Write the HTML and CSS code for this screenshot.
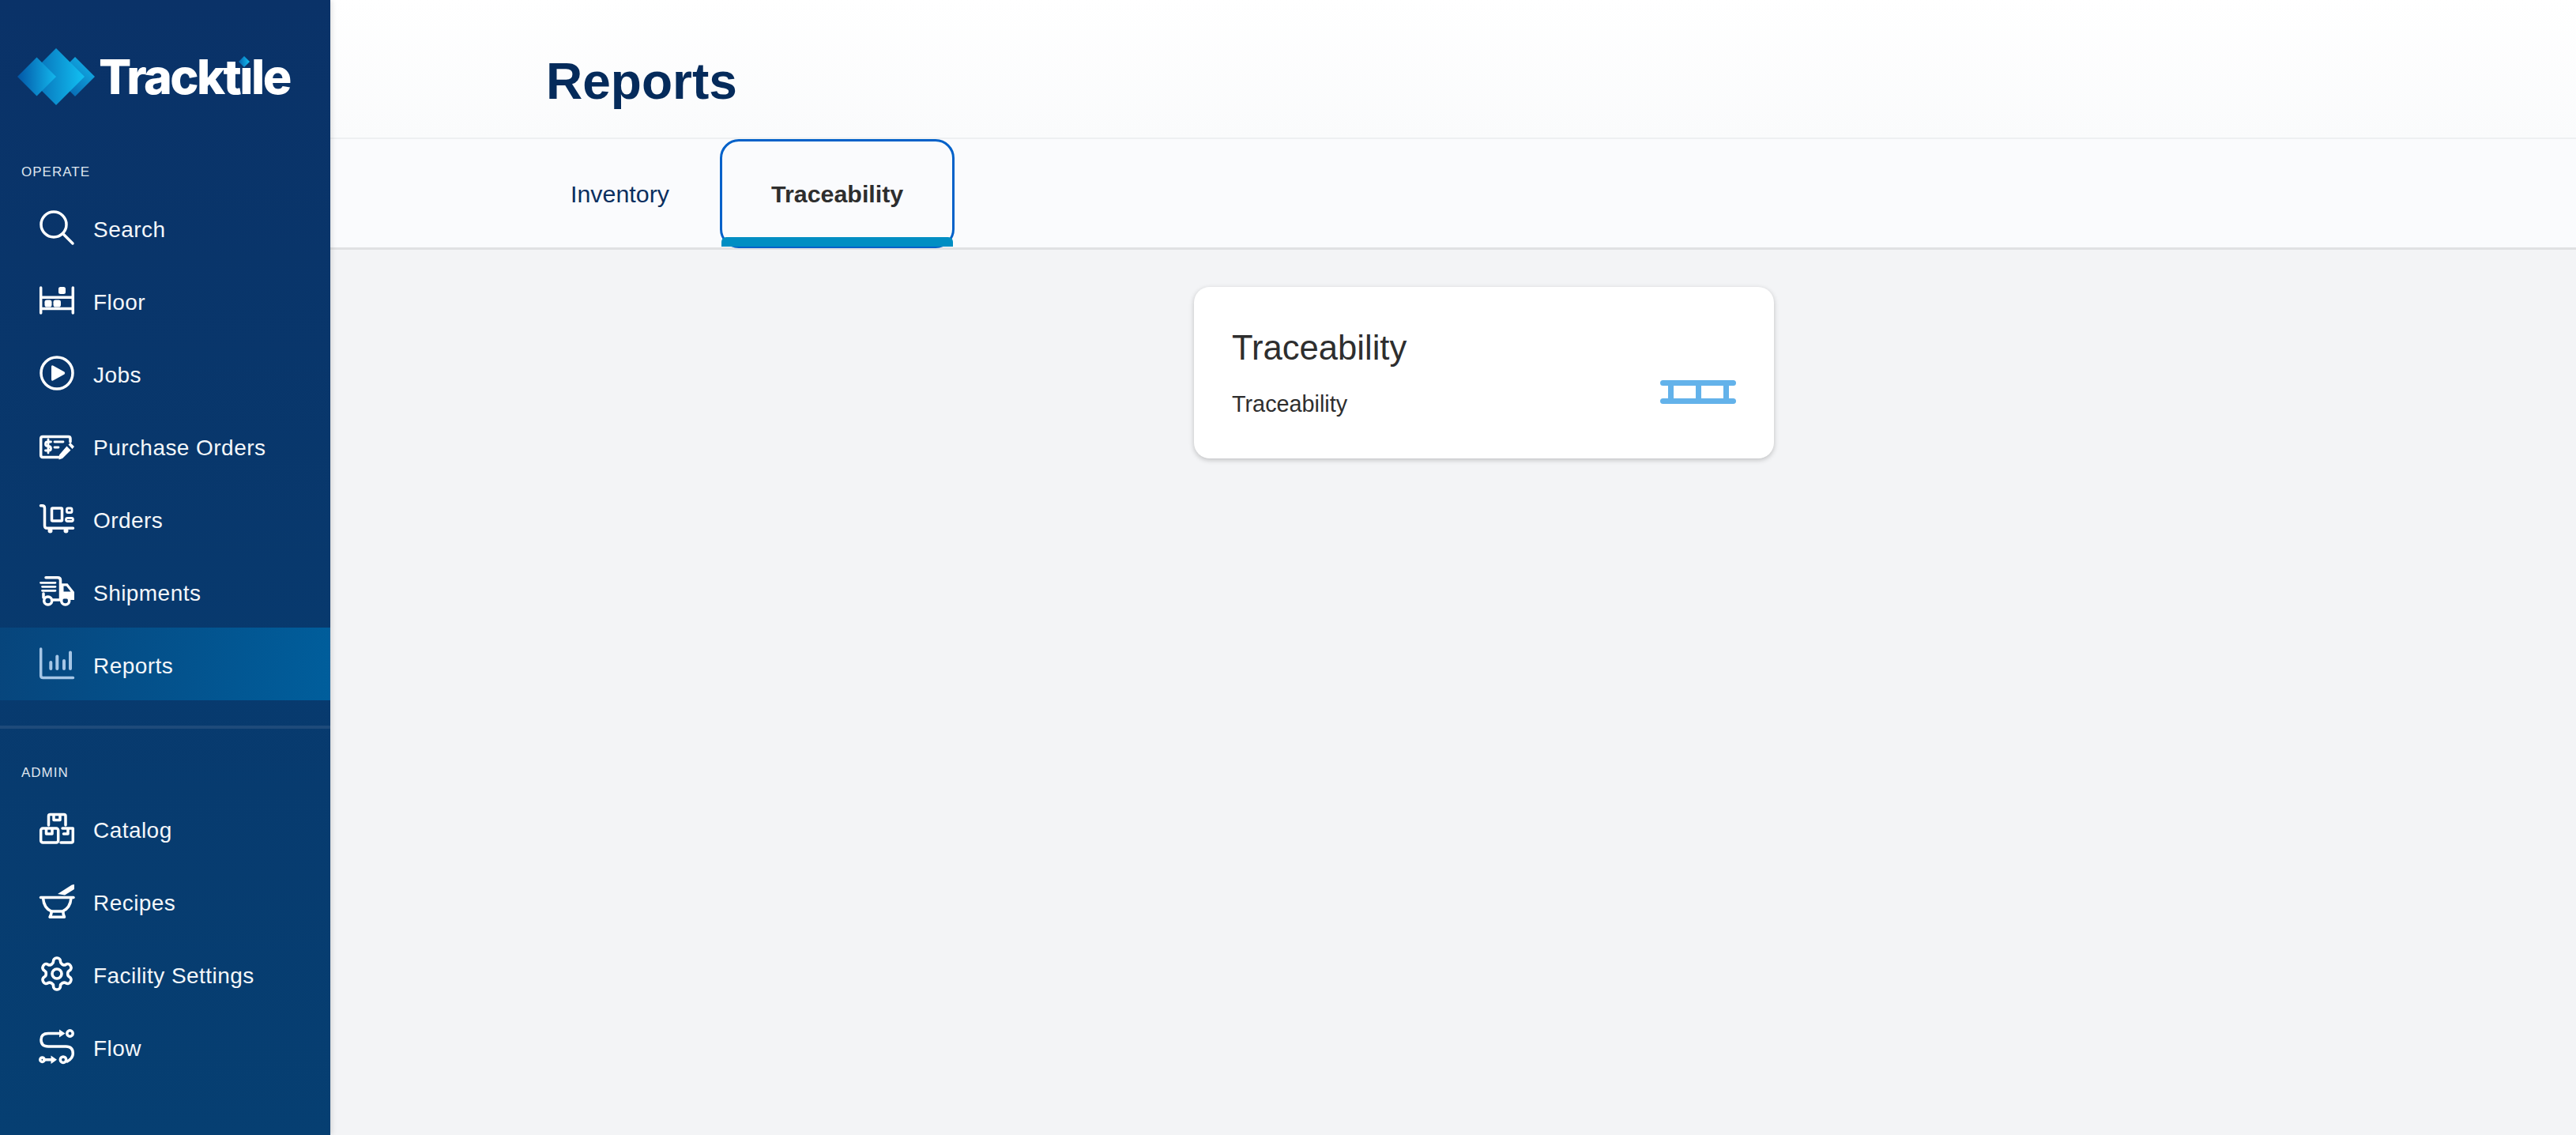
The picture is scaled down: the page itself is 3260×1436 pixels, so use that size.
FILE: index.html
```html
<!DOCTYPE html>
<html lang="en">
<head>
<meta charset="utf-8">
<title>Reports</title>
<link rel="stylesheet" href="styles.css">
</head>
<body>
<div class="app">
  <aside class="sidebar">
    <div class="logo">
      <svg class="logo-mark" viewBox="0 0 100 54" width="100" height="54" aria-hidden="true">
        <defs>
          <linearGradient id="gl" x1="0" y1="0" x2="1" y2="0"><stop offset="0" stop-color="#0256a6"/><stop offset="1" stop-color="#13b7ec"/></linearGradient>
          <linearGradient id="gm" x1="0" y1="0" x2="1" y2="0"><stop offset="0" stop-color="#0562ae"/><stop offset="1" stop-color="#12c0f2"/></linearGradient>
          <linearGradient id="gr" x1="0" y1="1" x2="1" y2="0"><stop offset="0" stop-color="#0457a4"/><stop offset="1" stop-color="#14b9ee"/></linearGradient>
        </defs>
        <path d="M73 2 L98 27 L73 52 L48 27 Z" fill="url(#gr)"/>
        <path d="M49 -9 L85 27 L49 63 L13 27 Z" fill="url(#gm)"/>
        <path d="M24.500 2.500 L49 27 L24.500 51.500 L0 27 Z" fill="url(#gl)"/>
      </svg>
      <span class="wordmark">Trackt<span class="no-dot">i</span>le<svg class="wordmark-dot" viewBox="0 0 16 16" width="16" height="16" aria-hidden="true"><path d="M8 1 L15 8 L8 15 L1 8 Z" fill="url(#gm)"/></svg></span>
    </div>

    <div class="section-label">OPERATE</div>
    <nav class="nav">
      <a class="nav-item">
        <svg class="icon" viewBox="0 0 44 44" aria-hidden="true"><circle cx="18" cy="18" r="16"/><path d="M30 30 L42 42"/></svg>
        <span>Search</span>
      </a>
      <a class="nav-item">
        <svg class="icon" viewBox="0 0 44 44" aria-hidden="true"><path d="M1.700 6 V38 M42.300 6 V38 M2 18.300 H42 M2 32.500 H42"/><rect class="solid" x="24" y="5" width="9" height="9" rx="2.500"/><rect class="solid" x="6.500" y="21.500" width="9" height="9" rx="2.800"/><rect class="solid" x="17.500" y="21.500" width="9.500" height="9" rx="2.800"/></svg>
        <span>Floor</span>
      </a>
      <a class="nav-item">
        <svg class="icon" viewBox="0 0 44 44" aria-hidden="true"><circle cx="22" cy="22" r="20"/><path class="solid" d="M17 12.500 L31.500 20.500 Q33 22 31.500 23.500 L17 31.500 Q15 32.500 15 30 V14 Q15 11.500 17 12.500 Z"/></svg>
        <span>Jobs</span>
      </a>
      <a class="nav-item">
        <svg class="icon" viewBox="0 0 44 44" aria-hidden="true"><path d="M26 36.500 H4 Q1.700 36.500 1.700 34 V13 Q1.700 10.500 4 10.500 H36.500 Q39 10.500 39 13 V17"/><path class="mid" d="M14.500 17 H10 Q7.500 17 7.500 20 Q7.500 22.500 11 22.500 Q14.500 22.500 14.500 25.500 Q14.500 28 12 28 H7.500 M11 14 V31"/><path class="mid" d="M19 17 H30 M19 24 H24"/><path class="solid" d="M36.500 20.500 L39 18 L44 23 L41.500 26 Z M34.500 22.500 L39.500 27.500 L29 38 L24.500 39.500 L25 33.500 Z"/></svg>
        <span>Purchase Orders</span>
      </a>
      <a class="nav-item">
        <svg class="icon" viewBox="0 0 44 44" aria-hidden="true"><path d="M1.500 5.700 H3.500 Q6.500 5.700 6.500 9 V31 Q6.500 34.300 9.500 34.300 H42.500"/><rect x="15.500" y="9" width="13" height="16" rx="1"/><rect class="mid" x="34.500" y="9" width="6.500" height="5.500" rx="1.500"/><rect class="mid" x="33.500" y="21.500" width="9" height="4" rx="2"/><circle class="solid" cx="13.500" cy="37.500" r="3"/><circle class="solid" cx="33.500" cy="37.500" r="3"/></svg>
        <span>Orders</span>
      </a>
      <a class="nav-item">
        <svg class="icon" viewBox="0 0 44 44" aria-hidden="true"><path d="M8 4.700 H23 Q26.500 4.700 26.500 8 V33 H16 M5 25 V30"/><path class="solid" d="M28 12.300 H35.500 L44 23 V33 H38 V31.500 H28 Z"/><path class="cut" d="M30.500 15.500 H34 L39.500 22.500 H30.500 Z"/><path class="mid" d="M1.500 11.300 H20 M3.500 16.300 H20 M3.500 21.300 H20"/><circle class="wheel" cx="10.700" cy="34" r="5"/><circle class="wheel" cx="32.700" cy="34" r="5"/></svg>
        <span>Shipments</span>
      </a>
      <a class="nav-item active">
        <svg class="icon muted" viewBox="0 0 44 44" aria-hidden="true"><path d="M1.700 3 V37 Q1.700 39.500 4.500 39.500 H42.500"/><path class="bar" d="M14.300 20 V28 M22.300 12.500 V28 M31 18 V28 M39 7.500 V28"/></svg>
        <span>Reports</span>
      </a>
    </nav>

    <div class="divider"></div>

    <div class="section-label">ADMIN</div>
    <nav class="nav">
      <a class="nav-item">
        <svg class="icon" viewBox="0 0 44 44" aria-hidden="true"><path d="M11.500 18 V6.500 Q11.500 4.500 13.500 4.500 H31 Q33 4.500 33 6.500 V18 M18 4.500 V11.500 H26 V4.500"/><rect x="1.700" y="22" width="22" height="18" rx="2.500"/><path d="M8.500 22.500 V29 H16 V22.500"/><path d="M29 22 H42.300 V38 Q42.300 40 40.300 40 H27 M36 22.500 V29 H30.500"/></svg>
        <span>Catalog</span>
      </a>
      <a class="nav-item">
        <svg class="icon" viewBox="0 0 44 44" aria-hidden="true"><path class="solid" d="M23 13 L41 1.500 L44 1 V7 L32 14.500 Z"/><path d="M1.500 17.500 H43"/><path d="M4.500 18 Q5.500 31 15 35 H29 Q39 31 40 18"/><path d="M15 35 Q15.500 38 13 42.300 H31.500 Q29.500 38 30 35"/></svg>
        <span>Recipes</span>
      </a>
      <a class="nav-item">
        <svg class="icon gear" viewBox="1 1 22 22" aria-hidden="true"><path d="M12.220 2h-.44a2 2 0 0 0-2 2v.18a2 2 0 0 1-1 1.730l-.43.25a2 2 0 0 1-2 0l-.15-.08a2 2 0 0 0-2.730.73l-.22.38a2 2 0 0 0 .73 2.730l.15.1a2 2 0 0 1 1 1.720v.51a2 2 0 0 1-1 1.740l-.15.09a2 2 0 0 0-.73 2.730l.22.38a2 2 0 0 0 2.730.73l.15-.08a2 2 0 0 1 2 0l.43.25a2 2 0 0 1 1 1.730V20a2 2 0 0 0 2 2h.44a2 2 0 0 0 2-2v-.18a2 2 0 0 1 1-1.730l.43-.25a2 2 0 0 1 2 0l.15.08a2 2 0 0 0 2.730-.73l.22-.39a2 2 0 0 0-.73-2.730l-.15-.08a2 2 0 0 1-1-1.740v-.5a2 2 0 0 1 1-1.740l.15-.09a2 2 0 0 0 .73-2.730l-.22-.38a2 2 0 0 0-2.730-.73l-.15.08a2 2 0 0 1-2 0l-.43-.25a2 2 0 0 1-1-1.730V4a2 2 0 0 0-2-2z"/><circle cx="12" cy="12" r="3"/></svg>
        <span>Facility Settings</span>
      </a>
      <a class="nav-item">
        <svg class="icon" viewBox="0 0 44 44" aria-hidden="true"><path d="M26 5.500 H11 Q2 5.500 2 13.500 Q2 22 11 22 H33.500 Q42.300 22 42.300 31 Q42.300 37 35 41"/><path class="solid" d="M25 0.500 L32.500 5.500 L25 10.500 Z"/><circle cx="38.500" cy="5.500" r="3.700"/><circle cx="30" cy="38.700" r="3.700"/><circle cx="3.500" cy="38.700" r="2.700"/><path d="M6 38.700 H17"/><path class="solid" d="M14.500 33.500 L22 38.700 L14.500 44 Z"/></svg>
        <span>Flow</span>
      </a>
    </nav>
  </aside>

  <main class="main">
    <header class="page-header">
      <h1 class="page-title">Reports</h1>
    </header>
    <div class="tabs">
      <a class="tab">Inventory</a>
      <a class="tab selected">Traceability</a>
    </div>
    <section class="content">
      <article class="card">
        <div class="card-text">
          <h2 class="card-title">Traceability</h2>
          <p class="card-sub">Traceability</p>
        </div>
        <svg class="card-icon" viewBox="0 0 96 30" width="96" height="30" aria-hidden="true">
          <path d="M3.500 3.500 H92.500 M3.500 26.500 H92.500" class="rail"/>
          <path d="M13.500 4 V26 M48.500 4 V26 M83.500 4 V26" class="post"/>
        </svg>
      </article>
    </section>
  </main>
</div>
</body>
</html>
```

FILE: styles.css
```css
* {
  box-sizing: border-box;
}

html,
body {
  margin: 0;
  height: 100%;
}

body {
  font-family: "Liberation Sans", Arial, sans-serif;
  background: #f3f4f6;
  color: #2e2e2e;
}

.app {
  display: flex;
  height: 1436px;
  overflow: hidden;
}

.sidebar {
  flex: 0 0 418px;
  background: linear-gradient(180deg, #0a3268 0%, #063f72 100%);
  color: #fff;
  box-shadow: 2px 0 6px rgba(0, 0, 0, 0.12);
  position: relative;
}

.logo {
  height: 190px;
  display: flex;
  align-items: flex-start;
  padding: 70px 0 0 22px;
  gap: 3px;
}

.logo-mark {
  overflow: visible;
  flex: none;
}

.wordmark {
  position: relative;
  font-family: Inter, "Liberation Sans", sans-serif;
  font-weight: 800;
  font-size: 61px;
  letter-spacing: -2.6px;
  line-height: 54px;
  color: #fff;
}

.no-dot {
  display: inline-block;
  background: linear-gradient(180deg, transparent 0 22%, #fff 22% 100%);
  -webkit-background-clip: text;
  background-clip: text;
  color: transparent;
}

.wordmark-dot {
  position: absolute;
  left: 176px;
  top: 0;
}

.section-label {
  height: 52px;
  display: flex;
  align-items: center;
  padding: 4px 0 0 27px;
  font-size: 17px;
  letter-spacing: 1px;
  color: #dfe6ef;
}

.nav {
  display: flex;
  flex-direction: column;
}

.nav-item {
  height: 92px;
  display: flex;
  align-items: center;
  padding-left: 50px;
  gap: 24px;
  font-size: 28px;
  letter-spacing: 0.45px;
  color: #f4f7fa;
}

.nav-item span {
  padding-top: 6px;
}

.nav-item.active {
  background: linear-gradient(100deg, #07457c 0%, #005e9c 100%);
}

.icon {
  flex: none;
  width: 44px;
  height: 44px;
  overflow: visible;
  fill: none;
  stroke: #fff;
  stroke-width: 3.5;
  stroke-linecap: round;
  stroke-linejoin: round;
}

.icon .mid {
  stroke-width: 2.800;
}

.icon .wheel {
  stroke-width: 3.500;
}

.icon .bar {
  stroke-width: 4;
}

.icon.gear {
  stroke-width: 1.800;
}

.icon .solid {
  fill: #fff;
  stroke: none;
}

.icon .cut {
  fill: #0a3a6e;
  stroke: none;
}

.icon.muted {
  stroke: #a6c6e6;
}

.divider {
  height: 4px;
  margin: 32px 0 28px;
  background: #1e4a7a;
}

.main {
  flex: 1;
  min-width: 0;
  display: flex;
  flex-direction: column;
}

.page-header {
  height: 176px;
  padding: 32px 0 0 273px;
  display: flex;
  align-items: center;
  background: linear-gradient(180deg, #ffffff 0%, #fafbfc 100%);
  border-bottom: 2px solid #eef0f2;
}

.page-title {
  margin: 0;
  font-size: 64px;
  font-weight: 700;
  color: #052b5b;
}

.tabs {
  height: 140px;
  display: flex;
  gap: 34px;
  padding-left: 274px;
  background: #fafbfd;
  border-bottom: 3px solid #e0e1e3;
}

.tab {
  height: 138px;
  display: flex;
  align-items: center;
  padding: 0 30px;
  font-size: 30.400px;
  color: #0a2f5f;
}

.tab.selected {
  position: relative;
  padding: 0 62px;
  font-weight: 700;
  color: #2e2e2e;
  border: 3px solid #0061c9;
  border-radius: 24px;
}

.tab.selected::after {
  content: "";
  position: absolute;
  left: -1px;
  right: -1px;
  bottom: -1px;
  height: 12px;
  background: #008ec3;
  border-radius: 6px 6px 0 0;
}

.content {
  flex: 1;
  display: flex;
  justify-content: center;
  align-items: flex-start;
  padding: 47px 0 0 78px;
}

.card {
  width: 734px;
  height: 217px;
  display: flex;
  align-items: flex-start;
  justify-content: space-between;
  padding: 52px 48px 0 48px;
  background: #fff;
  border-radius: 20px;
  box-shadow: 0 2px 6px rgba(0, 0, 0, 0.22);
}

.card-title {
  margin: 0;
  font-size: 43.600px;
  font-weight: 400;
  line-height: 50px;
  color: #2e2e2e;
}

.card-sub {
  margin: 29px 0 0;
  font-size: 28.800px;
  line-height: 34px;
  color: #2e2e2e;
}

.card-icon {
  margin-top: 66px;
  flex: none;
}

.card-icon .rail {
  fill: none;
  stroke: #63b2ea;
  stroke-width: 7;
  stroke-linecap: round;
}

.card-icon .post {
  fill: none;
  stroke: #63b2ea;
  stroke-width: 7;
}
```
